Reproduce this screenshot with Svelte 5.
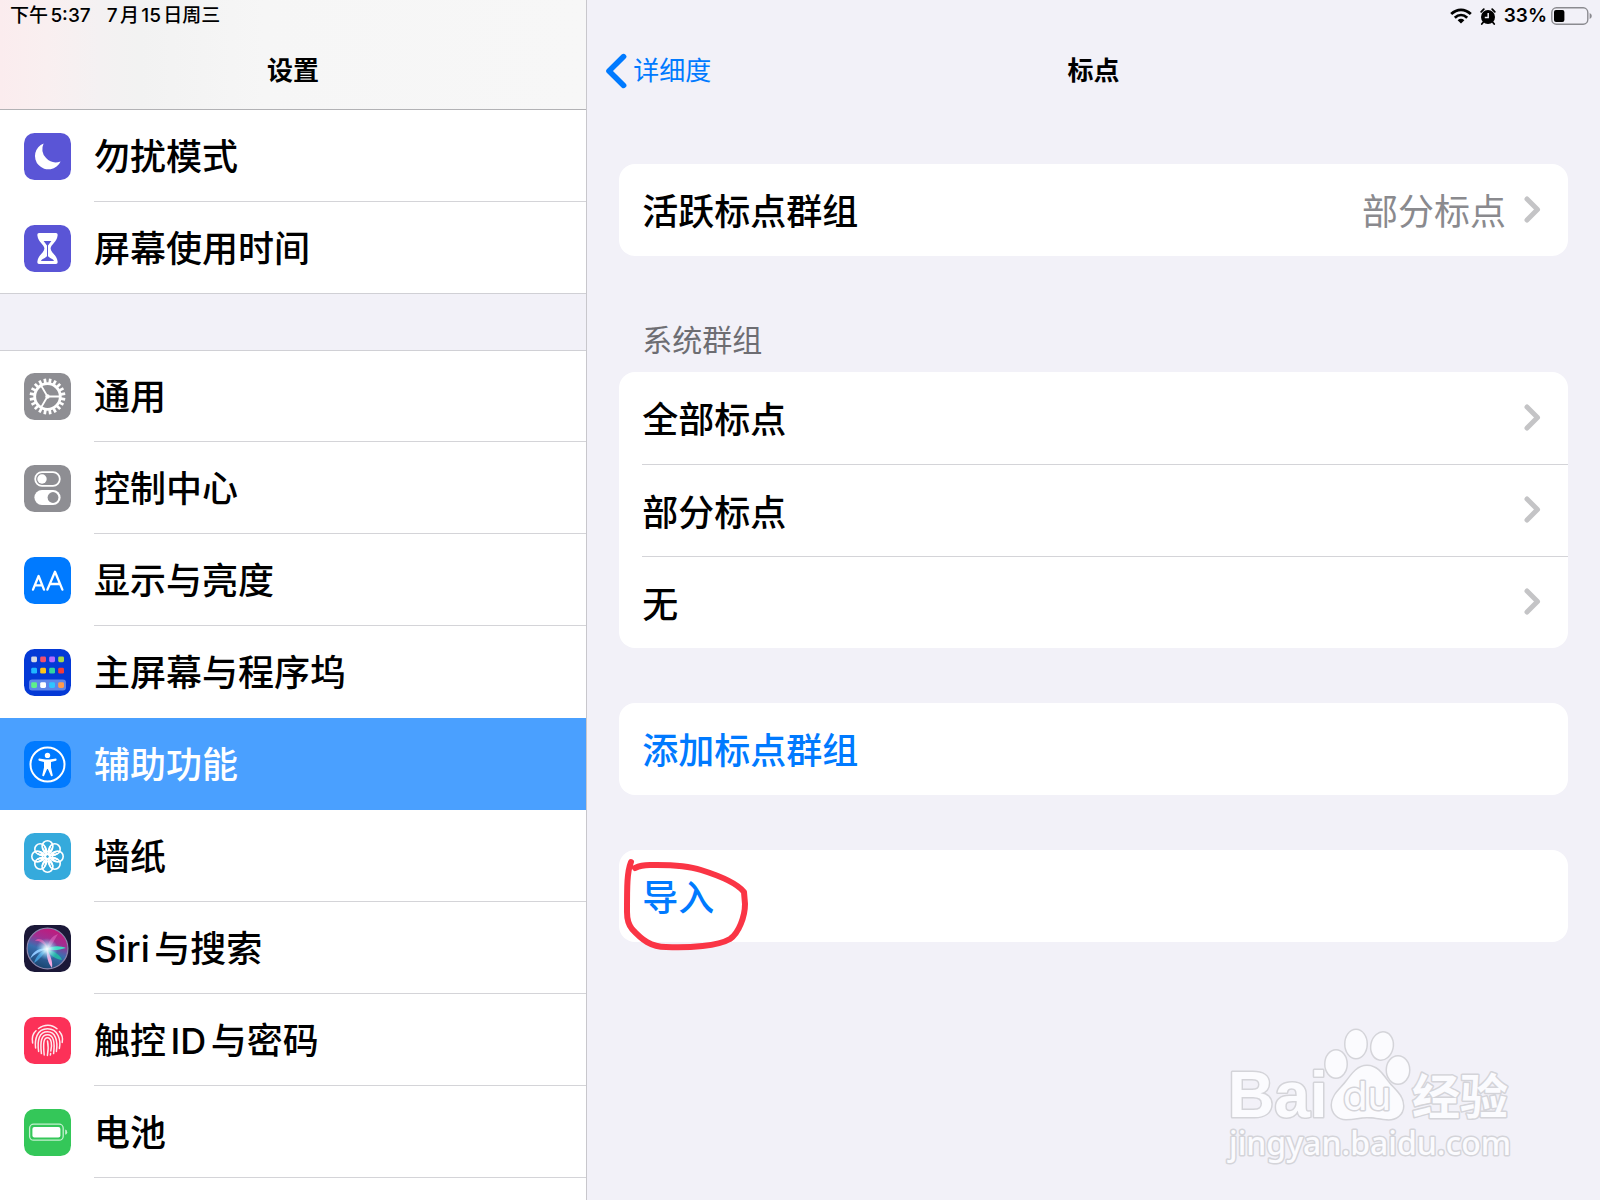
<script lang="ts">
	interface Item {
		icon: string;
		label: string;
		color: string;
	}

	const groups: Item[][] = [
		[
			{ icon: 'moon', label: '勿扰模式', color: '#5a55d6' },
			{ icon: 'hourglass', label: '屏幕使用时间', color: '#5a55d6' }
		],
		[
			{ icon: 'gear', label: '通用', color: '#8e8e93' },
			{ icon: 'toggles', label: '控制中心', color: '#8e8e93' },
			{ icon: 'text', label: '显示与亮度', color: '#007aff' },
			{ icon: 'home', label: '主屏幕与程序坞', color: '#0439d6' },
			{ icon: 'accessibility', label: '辅助功能', color: '#007aff' },
			{ icon: 'flower', label: '墙纸', color: '#35aadc' },
			{ icon: 'siri', label: 'Siri与搜索', color: '#1b1838' },
			{ icon: 'finger', label: '触控ID与密码', color: '#fc3158' },
			{ icon: 'battery', label: '电池', color: '#34c759' }
		]
	];

	const systemGroups = ['全部标点', '部分标点', '无'];

	const homeDots = [
		['#d6d9e4', '#f0506e', '#b36bff', '#a5d84b'],
		['#1fb6ff', '#fcc419', '#2fd6a0', '#f23b3b']
	];
	const dockDots = ['#5ef08a', '#ffffff', '#2fc4ff', '#ff9a4d'];

	const teeth = Array.from({ length: 20 }, (_, i) => i * 18);
	const petals = Array.from({ length: 8 }, (_, i) => i * 45);

	let selected = $state('辅助功能');
</script>

{#snippet chevron()}
	<svg class="chevron" viewBox="0 0 17 27" aria-hidden="true">
		<path d="M3 3 L13.5 13.5 L3 24" fill="none" stroke="#c4c4c6" stroke-width="5" stroke-linecap="round" stroke-linejoin="round" />
	</svg>
{/snippet}

{#snippet glyph(name: string, color: string)}
	<svg class="icon" viewBox="0 0 47 47" aria-hidden="true">
		<rect width="47" height="47" rx="10.5" fill={color} />
		{#if name === 'moon'}
			<path d="M19.6 10.4 A13.4 13.4 0 1 0 36.6 28.4 A13.4 13.4 0 0 1 19.6 10.4z" fill="#fff" />
		{:else if name === 'hourglass'}
			<path d="M15 8 H32 Q34 8 33.6 10.4 C33 17 26.6 19.5 26.6 23.5 C26.6 27.5 33 30 33.6 36.6 Q34 39 32 39 H15 Q13 39 13.4 36.6 C14 30 20.4 27.5 20.4 23.5 C20.4 19.5 14 17 13.4 10.4 Q13 8 15 8z" fill="#fff" />
			<path d="M19.6 16 H27.4 L24 20.4 V31 C25 33 29.4 33.8 30 36 H17 C17.6 33.8 22 33 23 31 V20.4z" fill={color} />
		{:else if name === 'gear'}
			<g fill="none" stroke="#fff">
				<circle cx="23.5" cy="23.5" r="12.8" stroke-width="2.8" />
				{#each teeth as a}
					<path d="M23.5 5.6 V10" stroke-width="2.7" transform="rotate({a + 9} 23.5 23.5)" />
				{/each}
				<path d="M23.5 23.5 H36 M23.5 23.5 L17.2 12.8 M23.5 23.5 L17.2 34.2" stroke-width="1.8" />
			</g>
			<circle cx="23.5" cy="23.5" r="2.2" fill="#fff" />
		{:else if name === 'toggles'}
			<rect x="11.2" y="7.2" width="24.6" height="13.6" rx="6.8" fill="none" stroke="#fff" stroke-width="1.8" />
			<circle cx="18" cy="14" r="4.7" fill="#fff" />
			<rect x="10.4" y="25" width="26.2" height="15" rx="7.5" fill="#fff" />
			<circle cx="29" cy="32.5" r="5.4" fill={color} />
		{:else if name === 'text'}
			<g fill="none" stroke="#fff" stroke-width="2.3" stroke-linecap="round" stroke-linejoin="round">
				<path d="M9 32.6 L14.6 19 L20 32.6 M11 28.4 H18.2" />
				<path d="M23.4 32.6 L31 14.8 L38.4 32.6 M26 27 H36" />
			</g>
		{:else if name === 'home'}
			{#each homeDots as row, r}
				{#each row as dot, c}
					<rect x={7.2 + c * 9} y={7.4 + r * 11.4} width="5.8" height="5.8" rx="1.4" fill={dot} />
				{/each}
			{/each}
			<rect x="5" y="30.6" width="37" height="11" rx="3" fill="#5c85ea" />
			{#each dockDots as dot, c}
				<rect x={7.2 + c * 9} y="33.2" width="5.8" height="5.8" rx="1.4" fill={dot} />
			{/each}
		{:else if name === 'accessibility'}
			<circle cx="23.5" cy="23.5" r="17" fill="none" stroke="#fff" stroke-width="2" />
			<circle cx="23.5" cy="14.4" r="2.7" fill="#fff" />
			<path d="M15 17.6 L21.6 18.6 H25.4 L32 17.6 Q33.2 18.8 32 19.8 L27 21 V26.4 L28.8 34.6 Q28 35.8 27 35 L23.9 28 H23.1 L20 35 Q19 35.8 18.2 34.6 L20 26.4 V21 L15 19.8 Q13.8 18.8 15 17.6z" fill="#fff" />
		{:else if name === 'flower'}
			<g fill="none" stroke="#fff" stroke-width="1.6">
				{#each petals as a}
					<circle cx="23.5" cy="13.2" r="5.4" transform="rotate({a} 23.5 23.5)" />
					<path d="M18.6 14.6 C18.6 18 21 20 23.5 21.4 C26 20 28.4 18 28.4 14.6" transform="rotate({a} 23.5 23.5)" />
				{/each}
				<circle cx="23.5" cy="23.5" r="2.4" />
			</g>
		{:else if name === 'siri'}
			<defs>
				<linearGradient id="siri-orb" x1="0.65" y1="0" x2="0.3" y2="1">
					<stop offset="0" stop-color="#c4187a" />
					<stop offset="0.3" stop-color="#a02f92" />
					<stop offset="0.55" stop-color="#3a6fb0" />
					<stop offset="1" stop-color="#17416a" />
				</linearGradient>
				<radialGradient id="siri-core">
					<stop offset="0" stop-color="#fff" />
					<stop offset="0.3" stop-color="#d8f6ff" stop-opacity="0.8" />
					<stop offset="1" stop-color="#6fc8f5" stop-opacity="0" />
				</radialGradient>
			</defs>
			<circle cx="23.5" cy="23.5" r="20.4" fill="url(#siri-orb)" stroke="#8c86ad" stroke-width="1.2" />
			<path d="M23.5 24 C20 19 16 15 11 16 C14 12 22 14 23.5 24z" fill="#e35cb0" opacity="0.8" />
			<path d="M23.5 24 C24 16 28 11 34 9 C30 15 29 20 23.5 24z" fill="#d75fb8" opacity="0.7" />
			<path d="M22 24 C30 20 37 21 42 23 C35 25 30 26 22 24z" fill="#3fe0c2" />
			<path d="M22 25 C28 25 36 29 38 35 C31 34 26 30 22 25z" fill="#25b3a4" />
			<path d="M23 24 C26 30 29 36 28 43 C24 38 22 31 23 24z" fill="#f3a9e0" />
			<path d="M24 24 C18 25 10 29 6 34 C9 26 16 22 24 24z" fill="#8fc8ff" />
			<path d="M23 24 C20 29 15 35 10 38 C12 31 17 26 23 24z" fill="#47a7e6" opacity="0.8" />
			<circle cx="23" cy="24" r="11" fill="url(#siri-core)" />
		{:else if name === 'finger'}
			<g fill="none" stroke="#fff" stroke-width="1.5" stroke-linecap="round" opacity="0.9">
				<path d="M14.5 11.5 C20 7 28 7 33 11.8" />
				<path d="M8.6 26 C7.6 20 9.4 16 12 13.8 M35.4 14.6 C38 17.6 39 22 38.2 25.4" />
				<path d="M11.6 31 C10.6 23 12.6 11.8 23.5 11.8 C34.2 11.8 37 23 35.4 31.4" />
				<path d="M14.6 34.4 C13 23 15.4 14.8 23.5 14.8 C31.6 14.8 34 24 32.4 34.4" />
				<path d="M17.4 36.6 C16 24 17.4 17.8 23.5 17.8 C29.6 17.8 31 25 29.6 36.6" />
				<path d="M20.2 38 C19 26 19.6 20.8 23.5 20.8 C27.4 20.8 28.4 28 26.8 34" />
				<path d="M23.5 24 C24.6 29 24.2 34 23.4 38.4 M26.6 36.6 L26.4 38" />
			</g>
		{:else if name === 'battery'}
			<rect x="5.6" y="15.2" width="33.6" height="16" rx="4" fill="none" stroke="#c5f0d0" stroke-width="1.3" />
			<rect x="8.4" y="18" width="28" height="10.4" rx="2" fill="#fff" />
			<path d="M41.2 20.6 Q43.2 21 43.2 23.2 Q43.2 25.4 41.2 25.8z" fill="#c5f0d0" />
		{/if}
	</svg>
{/snippet}

<div class="screen">
	<aside class="sidebar">
		<header class="bar sidebar-bar">
			<div class="status">
				<span>下午5:37</span>
				<span>7月15日周三</span>
			</div>
			<h1 class="title">设置</h1>
		</header>
		<nav>
			{#each groups as group}
				<ul class="group">
					{#each group as item}
						<li>
							<a
								href="#{item.icon}"
								class="item"
								class:selected={selected === item.label}
								onclick={() => (selected = item.label)}
							>
								{@render glyph(item.icon, item.color)}
								<span class="item-label">{item.label}</span>
							</a>
						</li>
					{/each}
				</ul>
			{/each}
		</nav>
	</aside>

	<main class="detail">
		<header class="bar">
			<div class="status status-right">
				<svg class="wifi" viewBox="0 0 22 16" aria-hidden="true">
					<g fill="none" stroke="#000" stroke-width="2.8">
						<path d="M1.2 6 C7 0.4 15 0.4 20.8 6" />
						<path d="M4.8 9.7 C8.6 6.2 13.4 6.2 17.2 9.7" />
					</g>
					<path d="M7.6 12.2 C9.6 10.4 12.4 10.4 14.4 12.2 L11 15.6z" />
				</svg>
				<svg class="alarm" viewBox="0 0 16 17" aria-hidden="true">
					<circle cx="8" cy="9" r="7" />
					<path d="M1.2 3.8 L3.8 1.2 M14.8 3.8 L12.2 1.2 M3.4 14 L1.8 16 M12.6 14 L14.2 16" stroke="#000" stroke-width="1.8" stroke-linecap="round" />
					<path d="M8.2 5 V9.6 H4.8" fill="none" stroke="#f2f1f8" stroke-width="1.5" />
				</svg>
				<span class="percent">33%</span>
				<svg class="power" viewBox="0 0 41 18" aria-hidden="true">
					<rect x="0.8" y="0.8" width="36" height="16.4" rx="4.6" fill="none" stroke="#8b8b90" stroke-width="1.4" />
					<rect x="3" y="3" width="10.4" height="12" rx="2" />
					<path d="M38.6 6 Q40.8 6.8 40.8 9 Q40.8 11.2 38.6 12z" fill="#8b8b90" />
				</svg>
			</div>
			<div class="nav-row">
				<a href="#verbosity" class="back">
					<svg viewBox="0 0 22 36" aria-hidden="true">
						<path d="M18.6 3.6 L4 18 L18.6 32.4" fill="none" stroke="#007aff" stroke-width="5.6" stroke-linecap="round" stroke-linejoin="round" />
					</svg>
					详细度
				</a>
				<h2 class="title">标点</h2>
			</div>
		</header>

		<div class="content">
			<div class="card">
				<button class="cell">
					<span>活跃标点群组</span>
					<span class="value">部分标点</span>
					{@render chevron()}
				</button>
			</div>

			<h3 class="section-title">系统群组</h3>
			<div class="card">
				{#each systemGroups as name}
					<button class="cell">
						<span>{name}</span>
						{@render chevron()}
					</button>
				{/each}
			</div>

			<div class="card spaced">
				<button class="cell action">添加标点群组</button>
			</div>

			<div class="card spaced">
				<button class="cell action">导入</button>
				<svg class="mark" viewBox="0 0 140 110" aria-hidden="true">
					<path
						d="M12 12 C8 22 8 36 8 62 C8 70 9 74 13 79 C23 90 32 97 47 97 C71 98 99 96 111 89 C120 83 126 66 126 54 L125 42 C118 33 98 25 82 20 C64 14 36 15 31 15 C23 15 20 16 16 18"
						fill="none"
						stroke="#fa3545"
						stroke-width="6"
						stroke-linecap="round"
						stroke-linejoin="round"
					/>
				</svg>
			</div>
		</div>

		<svg class="watermark" viewBox="0 0 300 150" role="img" aria-label="Baidu 经验">
			<g fill="#fbfbfe" stroke="#d4d4d9" stroke-width="3" stroke-linejoin="round" paint-order="stroke">
				<text x="5" y="97" class="wm-latin">Bai</text>
				<ellipse cx="113" cy="44" rx="10.5" ry="13.5" />
				<ellipse cx="133" cy="24" rx="10.5" ry="14" />
				<ellipse cx="159" cy="26" rx="10.5" ry="13.5" transform="rotate(12 159 26)" />
				<ellipse cx="175" cy="50" rx="11" ry="13.5" />
				<path d="M144 46 C154 46 159 54 165 62 C171 70 180 75 180 86 C180 95 172 100 163 99 C155 98 151 97 144 97 C137 97 131 99 123 99 C115 99 109 93 109 85 C109 75 118 69 124 61 C130 53 135 46 144 46z" />
				<text x="120" y="90" class="wm-du">du</text>
				<text x="189" y="94" class="wm-cjk">经验</text>
				<text x="6" y="135" class="wm-url">jingyan.baidu.com</text>
			</g>
		</svg>
	</main>
</div>

<style>
	:global(body) {
		margin: 0;
		background: #f2f1f8;
	}

	.screen {
		display: flex;
		min-height: 100vh;
		font-family: Inter, 'Noto Sans CJK SC', sans-serif;
		font-size: 36px;
		color: #000;
		text-autospace: normal;
	}

	.sidebar {
		flex: 0 0 auto;
		box-sizing: border-box;
		width: 36.7%;
		background: #fff;
		border-right: 1px solid #c8c7cc;
	}

	.bar {
		box-sizing: border-box;
		display: flex;
		flex-direction: column;
		height: 110px;
	}

	.sidebar-bar {
		background: linear-gradient(90deg, #fbecee 0%, #f9eff0 8%, #f4f1f2 17%, #f2f2f2 24%, #f6f6f6 45%, #f7f7f7 100%);
		border-bottom: 1px solid #b2b2b5;
	}

	.status {
		display: flex;
		align-items: center;
		gap: 16px;
		height: 32px;
		padding: 0 10px;
		font-size: 19px;
		line-height: 32px;
		font-weight: 500;
	}

	.status-right {
		justify-content: flex-end;
		gap: 4px;
		padding: 0 8px;
	}

	.percent {
		font-weight: 600;
	}

	.wifi {
		width: 22px;
		height: 16px;
	}

	.alarm {
		width: 16px;
		height: 17px;
		margin: 0 4px;
	}

	.power {
		width: 41px;
		height: 18px;
	}

	.title {
		margin: 0;
		font-size: 26px;
		line-height: 78px;
		font-weight: 600;
		text-align: center;
	}

	.nav-row {
		display: grid;
		grid-template-columns: 1fr auto 1fr;
		align-items: center;
		padding: 0 18px;
	}

	.back {
		display: flex;
		align-items: center;
		gap: 6px;
		font-size: 26px;
		line-height: 78px;
		color: #007aff;
		text-decoration: none;
	}

	.back svg {
		width: 22px;
		height: 36px;
	}

	.group {
		margin: 0;
		padding: 0;
		list-style: none;
	}

	.group + .group {
		border-top: 56px solid #f2f1f8;
	}

	.item {
		display: flex;
		align-items: center;
		gap: 23px;
		height: 92px;
		padding-left: 24px;
		color: inherit;
		text-decoration: none;
	}

	.icon {
		flex: none;
		width: 47px;
		height: 47px;
	}

	.item-label {
		flex: 1;
		box-sizing: border-box;
		height: 92px;
		line-height: 94px;
		font-weight: 500;
		border-bottom: 1px solid #d4d4d8;
	}

	.group:first-child li:last-child .item {
		box-shadow: inset 0 -1px #d0d0d5;
	}

	.group:last-child li:first-child .item {
		box-shadow: inset 0 1px #d0d0d5;
	}

	.group:first-child li:last-child .item-label,
	li:has(+ li .selected) .item-label,
	.selected .item-label {
		border-color: transparent;
	}

	.selected {
		background: #4aa0ff;
		color: #fff;
	}

	.detail {
		position: relative;
		flex: 1;
		min-width: 0;
	}

	.content {
		padding: 54px 32px;
	}

	.card {
		position: relative;
		background: #fff;
		border-radius: 16px;
	}

	.spaced {
		margin-top: 55px;
	}

	.cell {
		display: flex;
		align-items: center;
		width: calc(100% - 23px);
		height: 92px;
		margin-left: 23px;
		padding: 0 27px 2px 0;
		border: 0;
		background: none;
		font: inherit;
		font-weight: 500;
		color: inherit;
		text-align: left;
	}

	.cell + .cell {
		border-top: 1px solid #d4d4d8;
	}

	.value {
		margin-left: auto;
		font-weight: 400;
		color: #8a8a8e;
	}

	.chevron {
		width: 17px;
		height: 27px;
		margin-left: auto;
	}

	.value + .chevron {
		margin-left: 18px;
	}

	.action {
		color: #007aff;
	}

	.section-title {
		margin: 60px 23px 8px;
		font-size: 30px;
		line-height: 48px;
		font-weight: 400;
		color: #6d6d72;
	}

	.mark {
		position: absolute;
		left: 0;
		top: 0;
		width: 140px;
		height: 110px;
		pointer-events: none;
	}

	.watermark {
		position: absolute;
		right: 77px;
		bottom: 30px;
		width: 300px;
		height: 150px;
		pointer-events: none;
	}

	.wm-latin {
		font: 700 64px 'Liberation Sans', Arial, sans-serif;
	}

	.wm-du {
		font: 400 40px Inter, sans-serif;
	}

	.wm-cjk {
		font: 700 48px 'Noto Sans CJK SC', sans-serif;
	}

	.wm-url {
		font: 500 32px 'Noto Sans', sans-serif;
	}
</style>
